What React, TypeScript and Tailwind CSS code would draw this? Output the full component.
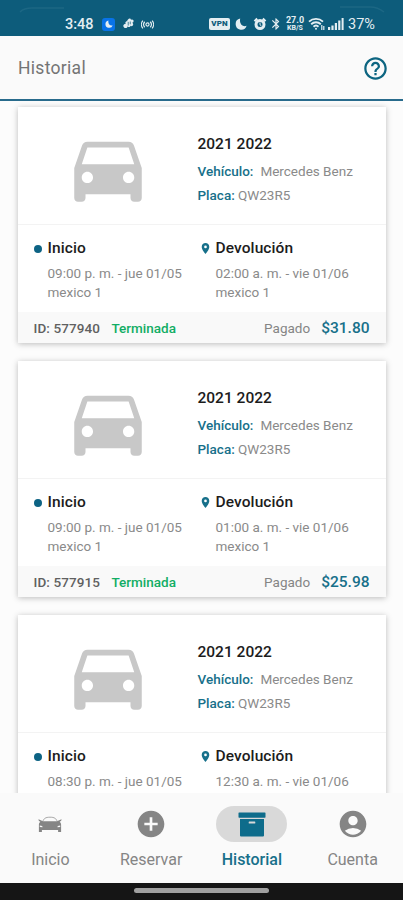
import type { ReactNode } from 'react';
import { MdAccountCircle, MdAddCircle, MdBluetooth, MdDirectionsCar, MdHelpOutline, MdLocationOn } from 'react-icons/md';

type Trip = {
  id?: string;
  total?: string;
  start: string;
  end: string;
};

const trips: Trip[] = [
  { id: '577940', total: '$31.80', start: '09:00 p. m. - jue 01/05', end: '02:00 a. m. - vie 01/06' },
  { id: '577915', total: '$25.98', start: '09:00 p. m. - jue 01/05', end: '01:00 a. m. - vie 01/06' },
  { start: '08:30 p. m. - jue 01/05', end: '12:30 a. m. - vie 01/06' },
];

function Moon({ className }: { className: string }) {
  return (
    <svg viewBox="0 0 12 12" className={className} fill="currentColor">
      <path d="M5.2.6A5.6 5.6 0 1 0 11.6 7.8C8 9.4 4 6 5.2.6z" />
    </svg>
  );
}

function StatusBar() {
  return (
    <div className="relative flex h-9 shrink-0 items-start bg-[#0d5c7b] pt-[15px] text-[#e4eef2]">
      <svg viewBox="0 0 403 14" className="absolute left-0 top-0 h-[14px] w-[403px]" fill="none" stroke="#1c6784" strokeWidth="1.5">
        <path d="M20 12c3-3 6-4 12-4h32M340 7h30c6 0 9 1 14 5" />
      </svg>
      <div className="flex h-[18px] w-[209px] items-center pl-[65px]">
        <span className="w-[29px] pt-px text-[14.5px] font-medium leading-[18px]">3:48</span>
        <span className="ml-2 flex h-[13px] w-[13px] items-center justify-center rounded-[3px] bg-[#0873e8]">
          <Moon className="h-[8px] w-[8px]" />
        </span>
        <svg viewBox="0 0 13 13" className="ml-[7px] h-[12px] w-[13px]" fill="currentColor">
          <path d="M6 1.5c1.2-1.400 3-.9 3.200.6 1.500-1 3.300.3 2.700 1.900-.3.900-1 1.200-1.600 1.200 1.500.6 1.800 2.400.6 3.300-.8.600-1.700.4-2.200-.1-.2 1.700-2.400 2-3 .5-.4 1.900-2.600 2.700-4 1.500C.4 9.300.6 7.300 2.300 6.600 3 6.300 3.600 6.500 4 6.800 2.900 6 2.800 4.700 3.700 4c.4-.4.9-.5 1.400-.4-.1-.8.2-1.600.9-2.100z" />
          <path d="M6.200 4.200v4M8.400 3.800v3" stroke="#0d5c7b" strokeWidth="0.8" />
        </svg>
        <svg viewBox="0 0 14 12" className="ml-[6px] h-[11px] w-[13px]" fill="none" stroke="currentColor" strokeWidth="1.3">
          <circle cx="7" cy="6" r="1.7" />
          <path d="M4 3a4.5 4.5 0 0 0 0 6M10 3a4.5 4.5 0 0 1 0 6M2 1.8a6.3 6.3 0 0 0 0 8.400M12 1.8a6.3 6.3 0 0 1 0 8.400" />
        </svg>
      </div>
      <div className="flex h-[18px] items-center">
        <span className="flex h-[12px] w-[21px] shrink-0 items-center justify-center rounded-[2px] bg-[#e4eef2] text-[8px] font-black leading-none tracking-[0.2px] text-[#0d5c7b]">
          VPN
        </span>
        <Moon className="ml-[5px] h-[12px] w-[12px]" />
        <svg viewBox="0 0 14 14" className="ml-[6px] h-[14px] w-[14px]" fill="none" stroke="currentColor">
          <circle cx="7" cy="7.6" r="4" strokeWidth="3" />
          <path d="M1.5 4.3 4.2 1.6M12.5 4.3 9.8 1.6" strokeWidth="2.2" />
          <path d="M7 5.5v2.3l1.4 1" strokeWidth="1" />
        </svg>
        <MdBluetooth className="ml-[2px] h-[14px] w-[14px]" />
        <span className="ml-[3px] flex w-[18px] flex-col items-center">
          <span className="text-[9px] font-bold leading-[9px]">27.0</span>
          <span className="text-[7px] font-bold leading-[7px]">KB/S</span>
        </span>
        <svg viewBox="0 0 17 14" className="ml-[4px] h-[14px] w-[17px]" fill="none" stroke="currentColor" strokeWidth="1.9">
          <path d="M1 4.6a10.4 10.4 0 0 1 14 0M3.2 7.2a7 7 0 0 1 9.6 0M5.5 9.7a3.6 3.6 0 0 1 5 0" />
          <circle cx="8" cy="11.8" r="1" fill="currentColor" stroke="none" />
          <path d="M13.8 8v5M15.8 9v4" strokeWidth="1.2" />
        </svg>
        <svg viewBox="0 0 16 12" className="ml-[3px] h-[12px] w-[16px]" fill="currentColor">
          <path d="M0 9h2.2v3H0zM3.4 7.4h2.2V12H3.4zM6.8 5H9v7H6.8zM10.2 2.6h2.2V12h-2.2zM13.6 0h2v12h-2z" />
        </svg>
        <span className="ml-1 pt-px text-[14.5px] leading-[18px]">37%</span>
      </div>
    </div>
  );
}

function Stop({ icon, title, time }: { icon: ReactNode; title: string; time: string }) {
  return (
    <div className="flex w-[168px]">
      <span className="flex h-5 w-[14px] shrink-0 items-center pt-px">{icon}</span>
      <div className="whitespace-nowrap">
        <h3 className="text-[15.5px] font-medium leading-5 tracking-[0.1px] text-[#1c1c1c]">{title}</h3>
        <p className="mt-[6px] text-[13.5px] leading-[19px] text-[#8a8a8a]">{time}</p>
        <p className="text-[13.5px] leading-[19px] text-[#8a8a8a]">mexico 1</p>
      </div>
    </div>
  );
}

function TripCard({ trip }: { trip: Trip }) {
  return (
    <article className="h-[236px] w-[368px] shrink-0 bg-white shadow-[0_1px_6px_rgba(0,0,0,0.26)]">
      <div className="flex h-[118px] border-b border-[#f3f3f3]">
        <div className="flex w-[180px] pl-[45px] pt-4">
          <MdDirectionsCar className="h-[90px] w-[90px] text-[#c8c8c8]" />
        </div>
        <div className="whitespace-nowrap pt-[27px] text-[13.5px]">
          <h2 className="text-[15.5px] font-medium leading-5 text-[#1c1c1c]">2021 2022</h2>
          <p className="mt-[5px] leading-6 text-[#8a8a8a]">
            <span className="mr-[7px] font-medium text-[#17708a]">Vehículo:</span>
            Mercedes Benz
          </p>
          <p className="leading-6 text-[#8a8a8a]">
            <span className="font-medium text-[#17708a]">Placa:</span> QW23R5
          </p>
        </div>
      </div>
      <div className="flex h-[87px] pl-4 pt-[13px]">
        <Stop icon={<span className="h-2 w-2 rounded-full bg-[#0d6384]" />} title="Inicio" time={trip.start} />
        <Stop icon={<MdLocationOn className="-ml-[3px] h-[13px] w-[13px] text-[#17708a]" />} title="Devolución" time={trip.end} />
      </div>
      {trip.id && (
        <div className="flex h-[31px] items-center bg-[#f9f9f9] pl-4 pr-4 pt-px text-[13.5px]">
          <span className="w-[67px] whitespace-nowrap font-medium tracking-[0.1px] text-[#606060]">ID: {trip.id}</span>
          <span className="ml-[11px] font-medium text-[#12ad64]">Terminada</span>
          <span className="ml-auto text-[#858585]">Pagado</span>
          <span className="ml-[11px] pt-[2px] text-[15.5px] font-medium text-[#17708a]">{trip.total}</span>
        </div>
      )}
    </article>
  );
}

function NavItem({ icon, label, active = false }: { icon: ReactNode; label: string; active?: boolean }) {
  return (
    <div className={active ? 'flex flex-1 flex-col items-center font-medium text-[#17708a]' : 'flex flex-1 flex-col items-center text-[#858585]'}>
      <span className={active ? 'flex h-9 w-[71px] items-center justify-center rounded-full bg-[#d9d9d9]' : 'flex h-9 w-[71px] items-center justify-center'}>
        {icon}
      </span>
      <span className="mt-2 text-[16px] leading-5">{label}</span>
    </div>
  );
}

function BottomNav() {
  return (
    <nav className="flex h-[90px] shrink-0 bg-[#fafafa] pt-[13px]">
      <NavItem
        label="Inicio"
        icon={
          <svg viewBox="0 0 24 17" className="h-[17px] w-6" fill="currentColor">
            <path d="M4.8 5.500C5.800 2.500 7.500 1.200 12 1.200s6.200 1.300 7.200 4.300" fill="none" stroke="currentColor" strokeWidth="1" opacity="0.7" />
            <path
              fillRule="evenodd"
              d="M.5 3.200 5 5.200h14l4.500-2c.2 1.300-.6 2-1.800 2.500.9.800 1.400 1.700 1.400 3.100v7.200h-3v-2H3.900v2h-3V8.800c0-1.400.5-2.300 1.400-3.100C1.100 5.200.3 4.500.5 3.200zM1.800 9.400v1.500l2.700.3c.3-1.100-.8-1.700-2.700-1.800zM22.200 9.400c-1.900.1-3 .7-2.700 1.800l2.700-.3z"
            />
          </svg>
        }
      />
      <NavItem label="Reservar" icon={<MdAddCircle className="h-8 w-8" />} />
      <NavItem
        label="Historial"
        active
        icon={
          <svg viewBox="0 0 28 25" className="h-[25px] w-7" fill="#0e6c8b">
            <rect x="0.5" y="0.5" width="27" height="5.2" rx="0.6" />
            <path fillRule="evenodd" d="M2 7h24v16.5a1 1 0 0 1-1 1H3a1 1 0 0 1-1-1zM11.3 9.5a.6.6 0 0 0-.6.6v.8c0 .33.27.6.6.6h5.4a.6.6 0 0 0 .6-.6v-.8a.6.6 0 0 0-.6-.6z" />
          </svg>
        }
      />
      <NavItem label="Cuenta" icon={<MdAccountCircle className="h-8 w-8" />} />
    </nav>
  );
}

export default function App() {
  return (
    <div className="flex h-[900px] w-[403px] flex-col overflow-hidden bg-[#fcfcfc] font-[Roboto,sans-serif]">
      <StatusBar />
      <header className="flex h-[65px] shrink-0 items-center justify-between border-b-2 border-[#286b8c] bg-[#fafafa] pl-[18px] pr-[14px] pt-px">
        <h1 className="text-[17.5px] tracking-[0.3px] text-[#747474]">Historial</h1>
        <MdHelpOutline className="h-[27px] w-[27px] text-[#0d6581]" />
      </header>
      <main className="flex min-h-0 flex-1 flex-col items-center gap-[18px] overflow-hidden pt-[6px]">
        {trips.map((trip, i) => (
          <TripCard key={i} trip={trip} />
        ))}
      </main>
      <BottomNav />
      <div className="flex h-[17px] shrink-0 justify-center bg-[#151515] pt-[5px]">
        <span className="h-[5px] w-[135px] rounded-full bg-[#a0a0a0]" />
      </div>
    </div>
  );
}
